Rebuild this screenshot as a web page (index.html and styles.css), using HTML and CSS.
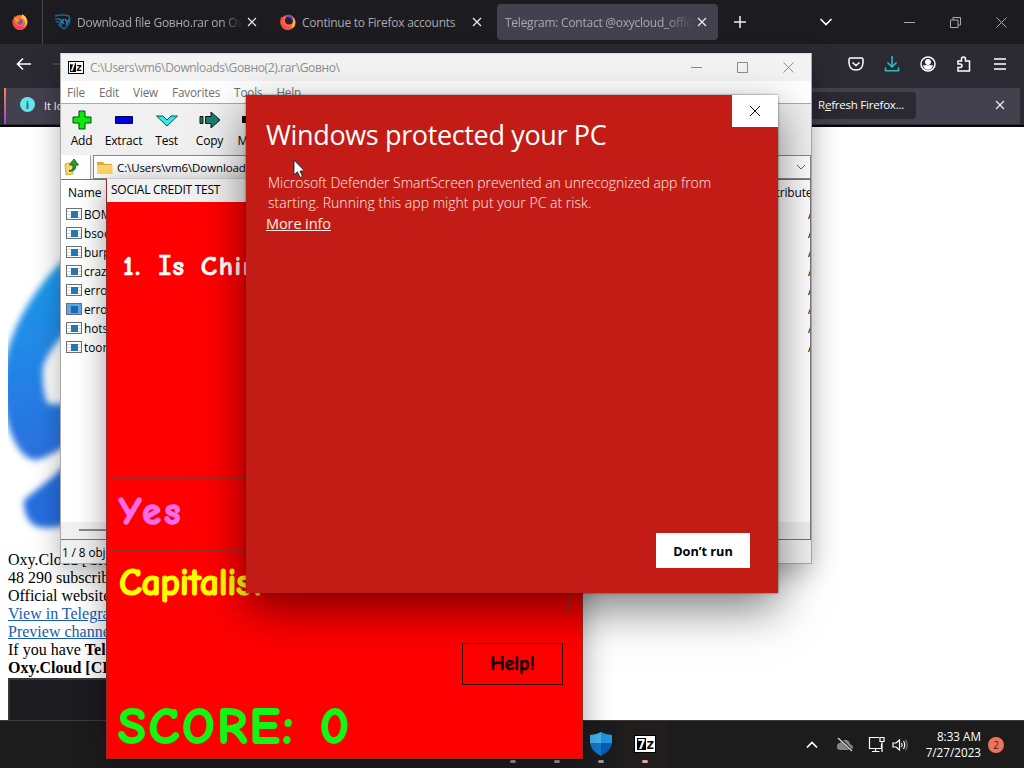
FILE: index.html
```html
<!DOCTYPE html>
<html lang="en">
<head>
    <meta charset="UTF-8">
    <meta name="viewport" content="width=device-width, initial-scale=1.0">
    <title>Desktop</title>
    <link rel="stylesheet" href="styles.css">
</head>
<body>
    <!-- Browser -->
    <div class="browser">
        <div class="tabbar">
            <div class="pinned">
                <svg width="18" height="18" viewBox="0 0 18 18"><circle cx="9" cy="9.5" r="7.5" fill="#ff7139"/><path d="M2 5Q0 15 9 17Q17 15 16 6Q14 10 12 12Q7 15 4 10Z" fill="#ff4054"/><path d="M8 5Q13 4 14 9Q15 12 11 14Q17 13 16 7Q15 3 11 1Q12 4 8 5Z" fill="#ffd13b"/><circle cx="9" cy="9" r="2.8" fill="#804fc0"/><path d="M3 3L7 6L9 8Q6 8 6 10Z" fill="#ff9a2e"/></svg>
            </div>
            <div class="tab">
                <svg width="18" height="18" viewBox="0 0 18 18"><path d="M1 3Q8 1 15 3Q18 10 10 16L5 12M1 6H6M2 9H6M4 12H8" fill="none" stroke="#1d6696" stroke-width="1.4"/><path d="M6 6L10 11M10 6L6 11M11 6L13 9M15 6L12 12" stroke="#2684bd" stroke-width="1.4"/></svg>
                <span class="tab-title t1">Download file Gовно.rar on Oxy</span>
                <svg class="x" width="10" height="10" viewBox="0 0 10 10"><path d="M1 1L9 9M9 1L1 9"/></svg>
            </div>
            <div class="tab second">
                <svg width="18" height="18" viewBox="0 0 18 18"><circle cx="9" cy="9.5" r="7.6" fill="#ff6a3c"/><path d="M2 4Q0 12 5 16Q11 19 15 13Q9 15 5 12Q2 9 5 5Z" fill="#ff4a4a"/><path d="M11 2Q17 5 16 12Q15 15 12 15Q15 11 12 7Z" fill="#ffb63e"/><circle cx="10" cy="7.600" r="4" fill="#2a2030"/><path d="M6 3Q9 0 13 3Q15 5 14 8Q12 4 8 4Z" fill="#7b4bc4"/></svg>
                <span class="tab-title t2">Continue to Firefox accounts</span>
                <svg class="x" width="10" height="10" viewBox="0 0 10 10"><path d="M1 1L9 9M9 1L1 9"/></svg>
            </div>
            <div class="tab active">
                <span class="tab-title t3">Telegram: Contact @oxycloud_official</span>
                <svg class="x" width="10" height="10" viewBox="0 0 10 10"><path d="M1 1L9 9M9 1L1 9"/></svg>
            </div>
            <svg class="plus" width="14" height="14" viewBox="0 0 14 14"><path d="M7 1V13M1 7H13"/></svg>
            <div class="window-controls">
                <svg width="14" height="10" viewBox="0 0 14 10"><path d="M1.5 2L7 7.5L12.5 2" stroke="#fff" stroke-width="1.6"/></svg>
                <svg width="11" height="11" viewBox="0 0 11 11"><path d="M0 5.5H11"/></svg>
                <svg width="11" height="11" viewBox="0 0 11 11"><path d="M.5 3H8V10.5H.5ZM3 3V.5H10.5V8H8"/></svg>
                <svg width="11" height="11" viewBox="0 0 11 11"><path d="M.5 .5L10.5 10.5M10.5 .5L.5 10.5"/></svg>
            </div>
        </div>
        <div class="toolbar">
            <svg width="16" height="14" viewBox="0 0 16 14"><path d="M15 7H1.5M7 1.5L1.5 7L7 12.5" stroke-width="1.6"/></svg>
            <svg class="forward" width="16" height="14" viewBox="0 0 16 14"><path d="M1 7H14M9 2L14 7L9 12"/></svg>
            <div class="toolbar-icons">
                <svg width="16" height="16" viewBox="0 0 16 16"><path d="M2.5 2H13.5Q15 2 15 3.5V7Q14.500 14 8 14Q1.500 14 1 7V3.500Q1 2 2.500 2ZM4.500 6.500L8 9.500L11.500 6.500"/></svg>
                <svg class="download" width="16" height="16" viewBox="0 0 16 16"><path d="M8 0V11M3.500 6.500L8 11L12.500 6.500M1.500 11.500V14.800H14.500V11.500"/></svg>
                <svg width="16" height="16" viewBox="0 0 16 16"><circle cx="8" cy="8" r="7"/><circle cx="8" cy="6" r="2.200" fill="#fff"/><path d="M4 10H12Q11 13 8 13Q5 13 4 10Z" fill="#fff"/></svg>
                <svg width="16" height="16" viewBox="0 0 16 16"><path d="M2 5H5.500V3Q5.500 1 7.500 1Q9.500 1 9.500 3V5H13.500V15H2V11.500H4Q6 11.500 6 9.800Q6 8 4 8H2Z"/></svg>
                <svg width="14" height="14" viewBox="0 0 14 14"><path d="M1 2H13M1 7H13M1 12H13"/></svg>
            </div>
        </div>
        <div class="notice-row">
            <div class="notice">
                <span class="info">i</span>
                <span class="notice-text">It looks like</span>
                <span class="refresh">R<u>e</u>fresh Firefox...</span>
                <svg class="x" width="10" height="10" viewBox="0 0 10 10"><path d="M1 1L9 9M9 1L1 9"/></svg>
            </div>
        </div>
        <div class="page">
            <svg class="page-logo" width="180" height="412" viewBox="8 128 180 412">
                <defs>
                    <linearGradient id="blue" x1="0" y1="0" x2="0" y2="1"><stop offset="0" stop-color="#18a2ef"/><stop offset="1" stop-color="#2b70e0"/></linearGradient>
                    <filter id="soft"><feGaussianBlur stdDeviation="3"/></filter>
                </defs>
                <g filter="url(#soft)">
                    <path d="M90 236C40 276 2 330 2 392C5 426 18 460 36 460Q49 458 90 430V404H48Q42 392 43 368Q48 345 90 310Z" fill="url(#blue)"/>
                    <path d="M90 440L55 475L24 500Q23 518 35 526Q49 532 90 518Z" fill="#286ee0"/>
                </g>
            </svg>
            <div class="page-text">
                <div>Oxy.Cloud [CHANNEL]</div>
                <div>48 290 subscribers</div>
                <div>Official website</div>
                <div><a href="#">View in Telegram</a></div>
                <div><a href="#">Preview channel</a></div>
                <div>If you have <b>Telegram</b></div>
                <div><b>Oxy.Cloud [CHANNEL]</b></div>
            </div>
            <div class="page-embed"></div>
        </div>
    </div>

    <!-- Taskbar -->
    <div class="taskbar">
        <div class="apps">
            <div class="app"></div>
            <div class="app"></div>
            <div class="app">
                <svg width="24" height="26" viewBox="0 0 24 26"><path d="M12 1Q17 4 23 4V12H12Z" fill="#2197e3"/><path d="M12 1Q7 4 1 4V12H12Z" fill="#45b5ee"/><path d="M1 12H12V25Q2 20 1 12Z" fill="#1478d0"/><path d="M23 12H12V25Q22 20 23 12Z" fill="#0c5cb5"/></svg>
            </div>
            <div class="app current"><span class="seven big"><b>7</b>z</span></div>
        </div>
        <div class="tray">
            <svg width="12" height="8" viewBox="0 0 12 8"><path d="M1 6.500L6 1.500L11 6.500" stroke-width="1.700"/></svg>
            <svg class="cloud" width="18" height="15" viewBox="0 0 18 15"><path d="M4 13Q0 12 1 9Q1 6 4 6Q6 2 10 3Q13 3 14 7Q17 8 17 11Q16 13 14 13Z" fill="#858585" stroke="none"/><path d="M3 1L16 14" stroke="#1c1c1c" stroke-width="2.500"/><path d="M2 1L16 14" stroke="#ddd" stroke-width="1.200"/></svg>
            <svg class="net" width="17" height="17" viewBox="0 0 17 17"><path d="M11 1.500H1.500V12.500H13.500V8M7.500 12.500V15.500M4 15.500H11.500M12 1.500H16V5.500H12ZM14 5.500V16"/></svg>
            <svg class="sound" width="17" height="14" viewBox="0 0 17 14"><path d="M1 5H4L7.500 2V12L4 9H1ZM9.500 5Q11 7 9.500 9M11.500 3Q14 7 11.500 11"/><path d="M13.500 1.500Q17 7 13.500 12.500" stroke="#777"/></svg>
            <div class="clock"><div>8:33 AM</div><div>7/27/2023</div></div>
            <span class="badge">2</span>
        </div>
    </div>

    <!-- Archive manager -->
    <div class="window archive">
        <div class="archive-title">
            <span class="seven"><b>7</b>z</span>
            <span class="archive-path">C:\Users\vm6\Downloads\Gовно(2).rar\Gовно\</span>
            <div class="archive-controls">
                <svg width="11" height="11" viewBox="0 0 11 11"><path d="M0 5.500H11"/></svg>
                <svg width="11" height="11" viewBox="0 0 11 11"><path d="M.5 .5H10.500V10.500H.5Z"/></svg>
                <svg width="11" height="11" viewBox="0 0 11 11"><path d="M.5 .5L10.500 10.500M10.500 .5L.5 10.500"/></svg>
            </div>
        </div>
        <div class="menu"><span>File</span><span>Edit</span><span>View</span><span>Favorites</span><span>Tools</span><span>Help</span></div>
        <div class="tools">
            <div class="tool"><svg width="22" height="22" viewBox="0 0 22 22"><path d="M8 2H14V8H20V14H14V20H8V14H2V8H8Z" fill="#0de90d" stroke="#064b06"/></svg><span>Add</span></div>
            <div class="tool"><svg width="22" height="22" viewBox="0 0 22 22"><path d="M2.500 7.500H19.500V14.500H2.500Z" fill="#0000e4" stroke="#000050"/></svg><span>Extract</span></div>
            <div class="tool"><svg width="22" height="22" viewBox="0 0 22 22"><path d="M.5 7H7L11 11L15 7H21.500L11 17Z" fill="#2eecec" stroke="#134b53"/></svg><span>Test</span></div>
            <div class="tool"><svg width="22" height="22" viewBox="0 0 22 22"><path d="M1 7.500H4V14.500H1ZM6.500 7.500H12V3L21 11L12 19V14.500H6.500Z" fill="#16806f" stroke="#111"/></svg><span>Copy</span></div>
            <div class="tool"><svg width="22" height="22" viewBox="0 0 22 22"><path d="M0 7H12V3L21 11L12 19V14H0Z" fill="#111"/></svg><span>Move</span></div>
        </div>
        <div class="address">
            <div class="up"><svg width="16" height="18" viewBox="0 0 16 18"><path d="M1 6L9 4V16L2 17Z" fill="#f5d967" stroke="#b4982b" stroke-width=".7"/><path d="M5 13Q10 12 9 7H5.500L10 1L14.500 7H12Q12 14 5 13Z" fill="#22a526" stroke="#14531a" stroke-width=".8"/></svg></div>
            <div class="combo">
                <svg width="18" height="15" viewBox="0 0 18 15"><path d="M1 2H7L9 4H16V14H1Z" fill="#dfad38"/><path d="M1 5H16.500V14H1Z" fill="#ffd96b"/></svg>
                <span>C:\Users\vm6\Downloads\</span>
                <svg class="arrow" width="10" height="7" viewBox="0 0 10 7"><path d="M1 1L5 5L9 1"/></svg>
            </div>
        </div>
        <div class="list">
            <div class="head"><span>Name</span><span class="attributes">Attributes</span></div>
            <div class="file"><i></i><span>BOMB.exe</span><em>A</em></div>
            <div class="file"><i></i><span>bsod.exe</span><em>A</em></div>
            <div class="file"><i></i><span>burp.exe</span><em>A</em></div>
            <div class="file"><i></i><span>crazy.exe</span><em>A</em></div>
            <div class="file"><i></i><span>error.exe</span><em>A</em></div>
            <div class="file selected"><i></i><span>error2.exe</span><em>A</em></div>
            <div class="file"><i></i><span>hots.exe</span><em>A</em></div>
            <div class="file"><i></i><span>toon.exe</span><em>A</em></div>
            <div class="scrollbar"><div></div></div>
        </div>
        <div class="status">1 / 8 object(s) selected</div>
    </div>

    <!-- Quiz -->
    <div class="window quiz">
        <div class="quiz-title">SOCIAL CREDIT TEST</div>
        <div class="quiz-body">
            <div class="question">1. <span>I</span>s China</div>
            <div class="answer yes">Yes</div>
            <div class="answer capitalist">Capitalist</div>
            <div class="help">Help!</div>
            <div class="score">SCORE: <span>0</span></div>
        </div>
    </div>

    <!-- SmartScreen -->
    <div class="window smartscreen">
        <div class="close"><svg width="12" height="12" viewBox="0 0 12 12"><path d="M1 1L11 11M11 1L1 11"/></svg></div>
        <h1>Windows protected your PC</h1>
        <p><span class="line1">Microsoft Defender SmartScreen prevented an unrecognized app from</span><br><span class="line2">starting. Running this app might put your PC at risk.</span></p>
        <a class="more" href="#">More info</a>
        <button class="dont-run">Don’t run</button>
    </div>

    <svg class="cursor" width="13" height="20" viewBox="0 0 13 20"><path d="M1 1V16L4.500 12.800L7 18.500L9.500 17.400L7 12H11.500Z" fill="#fff" stroke="#222" stroke-width=".9"/></svg>
</body>
</html>
```

FILE: styles.css
```css
* {
    box-sizing: border-box;
}
body {
    margin: 0;
    width: 1024px;
    height: 768px;
    overflow: hidden;
    position: relative;
    font-family: "Open Sans", "Noto Sans", sans-serif;
    font-size: 12px;
    background: #1c1c1c;
}
svg {
    flex: none;
    fill: none;
}
/* Browser */
.browser {
    height: 720px;
    display: flex;
    flex-direction: column;
    background: #fff;
    overflow: hidden;
}
.tabbar {
    height: 44px;
    flex: none;
    background: #1c1b20;
    display: flex;
    align-items: center;
    color: #aaa9ae;
}
.pinned {
    width: 43px;
    height: 44px;
    padding: 13px 0 0 11px;
    border-right: 1px solid #48474d;
}
.tab {
    display: flex;
    align-items: center;
    width: 225px;
    height: 36px;
    padding-left: 11px;
}
.tab.second {
    width: 229px;
}
.tab.active {
    width: 221px;
    background: #42414d;
    border-radius: 4px;
    padding-left: 8px;
}
.tab-title {
    width: 165px;
    margin: 0 5px 0 5px;
    white-space: nowrap;
    overflow: hidden;
    font-size: 12px;
    letter-spacing: -.25px;
}
.t1 {
    -webkit-mask-image: linear-gradient(90deg, #000 88%, transparent);
}
.t2 {
    width: 166px;
    margin-right: 4px;
}
.t3 {
    width: 188px;
    margin: 0 4px 0 0;
    -webkit-mask-image: linear-gradient(90deg, #000 85%, transparent);
}
.x, .plus {
    stroke: #eee;
    stroke-width: 1.2;
}
.plus {
    margin-left: 15px;
    stroke-width: 1.5;
}
.window-controls {
    display: flex;
    align-items: center;
    margin-left: auto;
    padding-right: 17px;
    gap: 35px;
    stroke: #aaa;
}
.window-controls svg:first-child {
    margin-right: 36px;
}
.toolbar {
    height: 40px;
    flex: none;
    background: #2b2a33;
    display: flex;
    align-items: center;
    padding: 0 17px 0 16px;
    stroke: #fff;
}
.forward {
    margin-left: 20px;
    stroke: #66656b;
}
.toolbar-icons {
    display: flex;
    align-items: center;
    gap: 20px;
    margin-left: auto;
    stroke-width: 1.5;
}
.toolbar-icons svg:last-child {
    margin-left: 1px;
}
.download {
    stroke: #20c5ca;
}
.notice-row {
    height: 43px;
    flex: none;
    background: #2b2a33;
    border-bottom: 2px solid #08080b;
    padding: 4px 4px 2px;
}
.notice {
    height: 36px;
    border-left: 2px solid #d56b86;
    border-image: linear-gradient(#f98749, #9b45d8) 1;
    background: #42414d;
    color: #fff;
    display: flex;
    align-items: center;
    padding: 0 15px 3px 14px;
    font-size: 11px;
}
.info {
    width: 15px;
    height: 15px;
    border-radius: 50%;
    background: #67e5ee;
    color: #266477;
    text-align: center;
    line-height: 15px;
    font-weight: bold;
    margin-right: 9px;
}
.notice-text {
    padding-top: 2px;
}
.refresh {
    margin-left: auto;
    margin-right: 79px;
    margin-top: 2px;
    width: 108px;
    height: 27px;
    line-height: 26px;
    padding-left: 10px;
    background: #2b2a33;
    border-radius: 4px;
    font-size: 11.5px;
    letter-spacing: -.22px;
    white-space: nowrap;
}
.page {
    flex: 1;
    padding: 1px 0 0 8px;
    font-family: "Liberation Serif", serif;
    font-size: 16px;
    line-height: 18px;
}
.page-logo {
    display: block;
}
.page-text {
    margin-top: 11px;
    white-space: nowrap;
}
.page a {
    color: #155dae;
}
.page-embed {
    width: 300px;
    height: 50px;
    margin-top: 1px;
    background: #1c1b20;
    border: 2px solid #38383b;
    border-right: 0;
}
/* Taskbar */
.taskbar {
    height: 48px;
    border-top: 1px solid #3b3b3b;
    background: #1c1c1c;
    display: flex;
    color: #fff;
}
.apps {
    display: flex;
    padding-left: 491px;
}
.app {
    width: 44px;
    height: 47px;
    display: flex;
    flex-direction: column;
    align-items: center;
    justify-content: space-between;
    padding: 10px 0 5px;
}
.app::after {
    content: "";
    width: 6px;
    height: 3px;
    border-radius: 2px;
    margin-top: auto;
    background: #999;
}
.app.current {
    background: #221d1d;
    padding-top: 14px;
}
.app.current::after {
    background: #e7a4aa;
}
.seven {
    display: flex;
    align-items: center;
    width: 16px;
    height: 13px;
    border: 1px solid #000;
    outline: 1px solid #fff;
    outline-offset: -2px;
    background: #fff;
    color: #000;
    font: bold 10px/11px "DejaVu Sans Mono", monospace;
}
.seven b {
    background: #000;
    color: #fff;
    width: 7px;
    text-align: center;
}
.seven.big {
    width: 22px;
    height: 18px;
    border-width: 1px;
    outline: 0;
    padding-left: 2px;
    font-size: 14px;
    line-height: 12px;
}
.seven.big b {
    width: 9px;
}
.tray {
    margin-left: auto;
    display: flex;
    align-items: center;
    padding-right: 20px;
    stroke: #fff;
    stroke-width: 1.2;
}
.cloud {
    margin-left: 18px;
}
.net {
    margin-left: 14px;
}
.sound {
    margin-left: 7px;
}
.clock {
    width: 72px;
    text-align: right;
    line-height: 16px;
    padding-bottom: 2px;
    font-size: 11.7px;
}
.badge {
    width: 16px;
    height: 16px;
    margin-left: 7px;
    border-radius: 50%;
    background: #ee735c;
    color: #38211e;
    text-align: center;
    font-size: 10px;
    line-height: 16px;
}
/* Windows */
.window {
    position: absolute;
}
.archive {
    left: 60px;
    top: 53px;
    width: 752px;
    height: 511px;
    background: #f0f0f0;
    border: 1px solid #aaa;
    border-top-color: #ddd;
    box-shadow: 0 8px 26px rgba(0, 0, 0, .3);
    display: flex;
    flex-direction: column;
    overflow: hidden;
}
.archive-title {
    height: 27px;
    flex: none;
    display: flex;
    align-items: center;
    padding: 0 17px 0 7px;
    background: #f3f3f3;
    color: #8e8e8e;
}
.archive-path {
    margin-left: 6px;
    font-size: 12px;
    letter-spacing: -.35px;
}
.archive-controls {
    display: flex;
    gap: 35px;
    margin-left: auto;
    stroke: #8b8b8b;
}
.menu {
    height: 23px;
    flex: none;
    display: flex;
    gap: 14px;
    padding: 3px 6px 0;
    background: #fff;
    border-bottom: 1px solid #aaa;
    color: #6f6f6f;
    font-size: 11.7px;
    letter-spacing: -.15px;
}
.tools {
    height: 51px;
    flex: none;
    display: flex;
    padding-top: 5px;
}
.tool {
    width: 43px;
    display: flex;
    flex-direction: column;
    align-items: center;
    font-size: 12px;
    line-height: 20px;
    letter-spacing: -.2px;
}
.tool:first-child {
    width: 41px;
}
.address {
    height: 24px;
    flex: none;
    display: flex;
    gap: 2px;
}
.up {
    width: 30px;
    padding: 3px 0 0 3px;
    background: #fff;
    border-right: 1px solid #aaa;
}
.combo {
    flex: 1;
    height: 24px;
    background: #fff;
    border: 1px solid #888;
    display: flex;
    align-items: center;
    gap: 3px;
    padding: 0 4px 0 2px;
    letter-spacing: -.1px;
    font-size: 11.5px;
}
.arrow {
    margin-left: auto;
    stroke: #666;
}
.list {
    height: 361px;
    flex: none;
    display: flex;
    flex-direction: column;
    background: #fff;
    border: 1px solid #777;
    border-width: 1px 1px 1px 0;
    overflow: hidden;
}
.head {
    height: 25px;
    flex: none;
    display: flex;
    justify-content: space-between;
    align-items: center;
    padding-left: 7px;
}
.attributes {
    width: 46px;
    overflow: hidden;
    letter-spacing: -.15px;
}
.file {
    height: 19px;
    flex: none;
    display: flex;
    align-items: center;
    padding: 0 0 1px 5px;
    font-size: 11.8px;
}
.file i {
    width: 16px;
    height: 12px;
    border: 1px solid #68717a;
    background: linear-gradient(#2678b1, #2678b1) center / 7px 7px no-repeat, repeating-linear-gradient(#fff 0 2px, #d7dce0 2px 3px);
    margin-right: 2px;
}
.file.selected i {
    background: linear-gradient(#116dbb, #116dbb) center / 7px 7px no-repeat, #63a6df;
}
.file em {
    font-style: normal;
    width: 2px;
    margin-left: auto;
    overflow: hidden;
}
.scrollbar {
    height: 17px;
    margin-top: auto;
    background: #f0f0f0;
    padding: 7px 18px;
}
.scrollbar div {
    height: 2px;
    width: 500px;
    background: #888;
}
.status {
    padding: 4px 1px;
    font-size: 11.8px;
    line-height: 17px;
    letter-spacing: -.1px;
}
/* Quiz */
.quiz {
    left: 106px;
    top: 178px;
    width: 477px;
    height: 581px;
    border: 1px solid #9b2929;
    border-top-color: #ccc;
    background: #f00;
    box-shadow: 0 4px 28px rgba(0, 0, 0, .38);
    display: flex;
    flex-direction: column;
    font-family: "Comic Sans MS", "Comic Neue", "Open Sans", sans-serif;
}
.quiz-title {
    height: 23px;
    flex: none;
    background: #f1f1f1;
    padding-left: 4px;
    font: 12px/21px "Open Sans", sans-serif;
    letter-spacing: -.25px;
}
.quiz-body {
    flex: 1;
    display: flex;
    flex-direction: column;
    padding: 46px 13px 0 4px;
}
.question {
    height: 230px;
    flex: none;
    padding-left: 12px;
    color: #fff;
    font-size: 27px;
    font-weight: bold;
    line-height: 37px;
    letter-spacing: 1.6px;
    word-spacing: 4px;
    -webkit-text-stroke: .7px #fff;
}
.question span {
    font-family: "DejaVu Sans Mono", monospace;
    font-weight: normal;
    font-size: 26px;
    letter-spacing: 0;
}
.answer {
    height: 66px;
    flex: none;
    margin-bottom: 6px;
    border: 1px solid #9c3028;
    padding-left: 7px;
    font-weight: bold;
    font-size: 38px;
    line-height: 67px;
}
.yes {
    color: #f76be7;
    letter-spacing: 3.4px;
    -webkit-text-stroke: 1.6px #f76be7;
}
.capitalist {
    color: #ff0;
    letter-spacing: -.4px;
    line-height: 65px;
    -webkit-text-stroke: 1.2px #ff0;
}
.help {
    width: 101px;
    height: 42px;
    flex: none;
    align-self: flex-end;
    margin: 21px 6px 0 0;
    border: 1px solid #300;
    color: #160000;
    font-size: 20px;
    font-weight: bold;
    line-height: 40px;
    text-align: center;
    -webkit-text-stroke: .6px #160000;
}
.score {
    padding-left: 7px;
    margin-top: 9px;
    color: #13f613;
    font-size: 51px;
    font-weight: bold;
    line-height: 66px;
    letter-spacing: 2.7px;
    -webkit-text-stroke: 1.8px #13f613;
}
.score span {
    margin-left: 3px;
}
/* SmartScreen */
.smartscreen {
    left: 246px;
    top: 95px;
    width: 532px;
    height: 498px;
    background: #c31c16;
    box-shadow: 0 0 2px rgba(0, 0, 0, .6), 0 16px 42px rgba(0, 0, 0, .5);
    display: flex;
    flex-direction: column;
    align-items: flex-start;
    color: #ffece3;
    padding-left: 20px;
}
.close {
    width: 46px;
    height: 32px;
    flex: none;
    align-self: flex-end;
    display: flex;
    align-items: center;
    justify-content: center;
    background: #fff;
    stroke: #111;
}
.smartscreen h1 {
    margin: -11px 0 0;
    color: #fff;
    font-size: 27px;
    font-weight: 400;
    line-height: 38px;
    letter-spacing: -.36px;
    white-space: nowrap;
}
.smartscreen p {
    margin: 19px 0 0 2px;
    font-size: 14px;
    font-weight: 350;
    line-height: 20px;
    white-space: nowrap;
}
.line1 {
    letter-spacing: -.03px;
}
.line2 {
    letter-spacing: .03px;
}
.more {
    color: #ffece3;
    font-size: 14.5px;
    line-height: 22px;
    letter-spacing: -.1px;
}
.dont-run {
    width: 94px;
    height: 35px;
    margin: auto 28px 25px auto;
    border: 0;
    background: #fff;
    color: #000;
    font: bold 12.7px "Open Sans", sans-serif;
}
.cursor {
    position: absolute;
    left: 293px;
    top: 159px;
}
```
